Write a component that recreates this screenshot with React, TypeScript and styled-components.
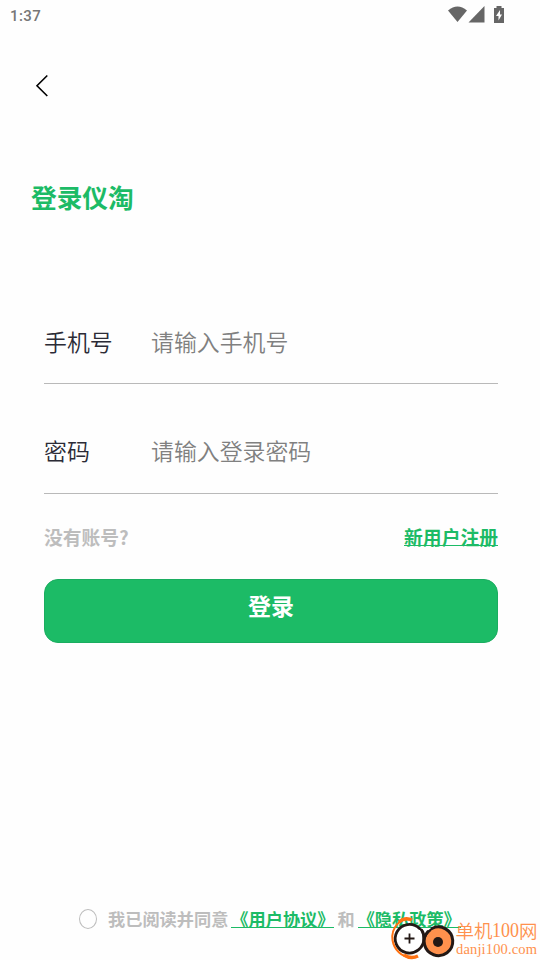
import React from "react";
import styled, { createGlobalStyle } from "styled-components";

const Global = createGlobalStyle`
  * { box-sizing: border-box; }
  body { margin: 0; background: #fefefe; }
`;

const Screen = styled.main`
  position: relative;
  display: flex;
  flex-direction: column;
  width: 540px;
  height: 960px;
  overflow: hidden;
  background: #fefefe;
  font-family: Roboto, "Noto Sans CJK SC", sans-serif;
`;

const StatusBar = styled.header`
  display: flex;
  align-items: center;
  justify-content: space-between;
  height: 30px;
  padding: 1px 35px 0 10px;
  font: 500 15px/30px Roboto, sans-serif;
  letter-spacing: 0.4px;
  color: #777;
`;

const StatusIcons = styled.svg`
  display: block;
  margin-top: -2px;
`;

const BackButton = styled.button`
  width: 14px;
  height: 24px;
  margin: 44px 0 0 35px;
  padding: 0;
  border: 0;
  background: none;
  svg { display: block; }
`;

const Title = styled.h1`
  margin: 79px 0 0 31px;
  height: 40px;
  font: 700 25.7px/40px "Noto Sans CJK SC", sans-serif;
  color: #1cbb66;
`;

const Form = styled.form`
  display: flex;
  flex-direction: column;
  margin: 57px 42px 0 44px;
`;

const Field = styled.label<{ $lift?: number }>`
  display: flex;
  align-items: center;
  height: 110px;
  padding-top: ${({ $lift = 0 }) => 25 - $lift}px;
  border-bottom: 1px solid #b9b9b9;
  font: 350 22.9px/34px "Noto Sans CJK SC", sans-serif;
  color: #2b2b36;
`;

const FieldName = styled.span`
  width: 107px;
`;

const Input = styled.input`
  flex: 1;
  min-width: 0;
  height: 34px;
  padding: 0;
  border: 0;
  outline: 0;
  background: none;
  font: inherit;
  &::placeholder { color: #808080; opacity: 1; }
`;

const Hint = styled.div`
  display: flex;
  align-items: center;
  justify-content: space-between;
  height: 85px;
  font: 700 18.8px/28px "Noto Sans CJK SC", sans-serif;
  color: #bdbdbd;
`;

const Link = styled.a`
  height: 19px;
  line-height: 19px;
  color: #1cbb66;
  border-bottom: 1px solid #1cbb66;
`;

const Submit = styled.button`
  height: 64px;
  padding: 0 0 13px;
  border: 1px solid #1bad60;
  border-radius: 14px;
  background: #1cbb66;
  color: #fff;
  font: 700 23px/34px "Noto Sans CJK SC", sans-serif;
`;

const Agreement = styled.footer`
  display: flex;
  align-items: center;
  margin: auto 0 28px 79px;
  font: 700 17.2px/26px "Noto Sans CJK SC", sans-serif;
  color: #bdbdbd;
  white-space: nowrap;
`;

const Radio = styled.span`
  width: 18px;
  height: 20px;
  margin-right: 11px;
  border: 1px solid #bdbdbd;
  border-radius: 50%;
`;

const Policy = styled(Link)`
  height: 18px;
  margin: 0 3px;
  line-height: 18px;
`;

const Watermark = styled.svg`
  position: absolute;
  left: 388px;
  top: 912px;
`;

export default function App() {
  return (
    <>
      <Global />
      <Screen>
        <StatusBar>
          <span>1:37</span>
          <StatusIcons width="58" height="20" viewBox="447 5 58 20" fill="#666">
            <path d="M448 10.500Q457.500 2.500 467 10.500L457.500 22Z" />
            <path d="M468.500 22.500L484.500 6V22.500Z" />
            <path d="M496.500 8V6H501.500V8H504V23H494V8Z" />
            <path d="M500 10L496 16H498.500V20.500L502 14.500H500Z" fill="#fff" />
          </StatusIcons>
        </StatusBar>
        <BackButton type="button" aria-label="返回">
          <svg width="14" height="24" viewBox="0 0 14 24" fill="none" stroke="#000" strokeWidth="1.6">
            <path d="M12.300 1.500L2 11.700L12.300 22" />
          </svg>
        </BackButton>
        <Title>登录仪淘</Title>
        <Form>
          <Field>
            <FieldName>手机号</FieldName>
            <Input placeholder="请输入手机号" />
          </Field>
          <Field $lift={2}>
            <FieldName>密码</FieldName>
            <Input type="password" placeholder="请输入登录密码" />
          </Field>
          <Hint>
            <span>没有账号?</span>
            <Link>新用户注册</Link>
          </Hint>
          <Submit type="button">登录</Submit>
        </Form>
        <Agreement>
          <Radio />
          <span>我已阅读并同意</span>
          <Policy>《用户协议》</Policy>
          <span>和</span>
          <Policy>《隐私政策》</Policy>
        </Agreement>
        <Watermark width="152" height="48" viewBox="388 912 152 48" fill="none">
          <circle cx="409.500" cy="938.500" r="14.300" fill="#fff" />
          <path d="M419.500 928.500A14.300 14.300 0 1 0 423.800 938.500C424 935 423.500 932 421.500 930" stroke="#231815" strokeWidth="2.800" strokeLinecap="round" />
          <circle cx="438" cy="941.500" r="14.300" fill="#ff914d" />
          <path d="M428 931.500A14.300 14.300 0 1 0 432 928.500" stroke="#231815" strokeWidth="3" strokeLinecap="round" />
          <path d="M421.500 930Q424 935 424 940Q425 934 430.500 930" stroke="#231815" strokeWidth="2.200" strokeLinecap="round" />
          <circle cx="438" cy="942" r="5" fill="#231815" />
          <path d="M409.500 933.500V943.500M404.500 938.500H414.500" stroke="#231815" strokeWidth="1.800" />
          <path d="M411 920C400 917 391 928 392.500 940C394 950 402 957 410 957" stroke="#ff7212" strokeWidth="2" />
          <path d="M399 922Q405 916.500 412 920M404 955Q411 959.500 418 956" stroke="#ff7212" strokeWidth="3.400" />
          <g fontFamily="'Liberation Serif', 'Noto Sans CJK SC', serif" fill="#ff914d">
            <text x="455.500" y="937.500" fontSize="18.500" fontWeight="350">单机</text>
            <text x="492" y="937" fontSize="20" textLength="27" lengthAdjust="spacingAndGlyphs">100</text>
            <text x="519" y="937.500" fontSize="18.500" fontWeight="350">网</text>
            <text x="456" y="954" fontSize="14.500" textLength="81">danji100.com</text>
          </g>
        </Watermark>
      </Screen>
    </>
  );
}
